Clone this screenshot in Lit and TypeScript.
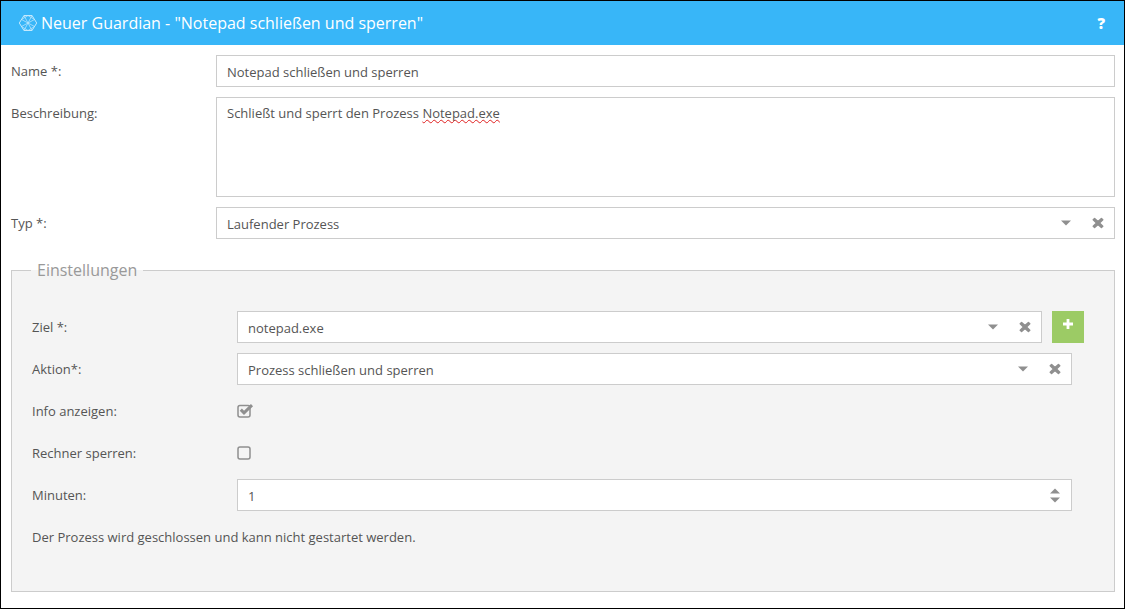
import { LitElement, html, css, svg } from "lit";
import { customElement } from "lit/decorators.js";

const timesIcon = svg`<svg class="ic-x" viewBox="0 0 12 12" width="12" height="12"><path d="M2.6 1.4 L6 4.6 L9.4 1.4 L10.8 2.8 L7.5 6 L10.8 9.2 L9.4 10.6 L6 7.4 L2.6 10.6 L1.2 9.2 L4.5 6 L1.2 2.8 Z" fill="#8f8f8f" stroke="#8f8f8f" stroke-width="1.4" stroke-linejoin="round"/></svg>`;
const caretIcon = svg`<svg class="ic-c" viewBox="0 0 10 6" width="10" height="6"><path d="M0 0.5 H10 L5 5.5 Z" fill="#8f8f8f"/></svg>`;

@customElement("app-root")
export class AppRoot extends LitElement {
  static styles = css`
    :host {
      display: block;
      width: 1125px;
      height: 609px;
      box-sizing: border-box;
      border: 1px solid #000;
      background: #fff;
      overflow: hidden;
      font-family: "Open Sans", sans-serif;
      font-size: 13px;
      color: #555;
    }
    .head {
      height: 44px;
      background: #38b6f8;
      display: flex;
      align-items: center;
      padding: 0 19px 0 17px;
      color: #fff;
      font-size: 16px;
      gap: 3px;
    }
    .head .title { flex: 1; white-space: nowrap; }
    .head svg { display: block; }
    .help { font-weight: 800; font-size: 15px; }
    .form {
      padding: 10px 9px 0 10px;
      display: flex;
      flex-direction: column;
      gap: 10px;
    }
    .row {
      display: grid;
      grid-template-columns: 205px 1fr;
      align-items: center;
      min-height: 32px;
    }
    .top { align-items: start; }
    .top label { padding-top: 7px; }
    .ctl {
      box-sizing: border-box;
      height: 32px;
      background: #fff;
      border: 1px solid #ccc;
      display: flex;
      align-items: center;
      padding: 0 10px;
      white-space: nowrap;
    }
    .ctl .v { flex: 1; padding-top: 1px; }
    .ctl.area { height: 100px; align-items: flex-start; padding-top: 6px; }
    .area .v { padding-top: 0; }
    .sp { text-decoration: underline wavy #e02020 1px; text-underline-offset: 1px; text-decoration-skip-ink: none; }
    .ctl svg { display: block; flex: none; }
    .ic-c { margin-right: 21px; }
    .sel { padding-right: 10px; }
    fieldset {
      margin: 10px 0 0;
      padding: 30px 42px 38px 20px;
      border: 1px solid #ccc;
      background: #f4f4f4;
      display: block;
      min-width: 0;
    }
    legend {
      font-size: 16px;
      color: #999;
      padding: 0 6px;
      margin-left: -1px;
      line-height: 22px;
    }
    .fs {
      display: flex;
      flex-direction: column;
      gap: 10px;
    }
    .with-btn { display: flex; gap: 10px; margin-right: -12px; }
    .with-btn .ctl { flex: 1; }
    .add {
      width: 32px;
      height: 32px;
      flex: none;
      background: #9ccb65;
      display: flex;
      align-items: flex-start;
      justify-content: center;
      padding-top: 8px;
      box-sizing: border-box;
    }
    .chk { display: block; }
    .spin { display: flex; flex-direction: column; gap: 3px; margin-right: 1px; }
    .note { min-height: 32px; display: flex; align-items: center; }
  `;

  render() {
    return html`
      <div class="head">
        <svg viewBox="0 0 20 20" width="20" height="20" fill="none" stroke="#c4e9fd" stroke-width="1">
          <path d="M6 2.5 H14 L18.7 10 L14 17.5 H6 L1.3 10 Z"/>
          <path d="M6 2.5 L14 17.5 M14 2.5 L6 17.5 M3.5 6.5 L16.5 13.5 M16.5 6.5 L3.5 13.5 M10 2.5 L3.5 6.5 M10 2.5 L16.5 6.5 M10 17.5 L3.5 13.5 M10 17.5 L16.5 13.5" stroke-width="0.7"/>
        </svg>
        <span class="title">Neuer Guardian - "Notepad schließen und sperren"</span>
        <span class="help">?</span>
      </div>
      <div class="form">
        <div class="row"><label>Name *:</label><div class="ctl"><span class="v">Notepad schließen und sperren</span></div></div>
        <div class="row top"><label>Beschreibung:</label><div class="ctl area"><span class="v">Schließt und sperrt den Prozess <span class="sp">Notepad.exe</span></span></div></div>
        <div class="row"><label>Typ *:</label><div class="ctl sel"><span class="v">Laufender Prozess</span>${caretIcon}${timesIcon}</div></div>
        <fieldset>
          <legend>Einstellungen</legend>
          <div class="fs">
            <div class="row"><label>Ziel *:</label><div class="with-btn"><div class="ctl sel"><span class="v">notepad.exe</span>${caretIcon}${timesIcon}</div><div class="add"><svg viewBox="0 0 10 10" width="10" height="10"><path d="M3.6 0 H6.4 V3.6 H10 V6.4 H6.4 V10 H3.6 V6.4 H0 V3.6 H3.6 Z" fill="#fff"/></svg></div></div></div>
            <div class="row"><label>Aktion*:</label><div class="ctl sel"><span class="v">Prozess schließen und sperren</span>${caretIcon}${timesIcon}</div></div>
            <div class="row"><label>Info anzeigen:</label>
              <svg class="chk" viewBox="0 0 17 14" width="17" height="14" fill="none"><rect x="1" y="1.5" width="12" height="11.5" rx="2" stroke="#8f8f8f" stroke-width="1.5"/><path d="M3.8 5.6 L7 8.8 L15 1.2" stroke="#8f8f8f" stroke-width="3"/></svg>
            </div>
            <div class="row"><label>Rechner sperren:</label>
              <svg class="chk" viewBox="0 0 14 14" width="14" height="14" fill="none"><rect x="1" y="1" width="12" height="12" rx="2" stroke="#8f8f8f" stroke-width="1.5"/></svg>
            </div>
            <div class="row"><label>Minuten:</label><div class="ctl"><span class="v">1</span>
              <div class="spin">
                <svg viewBox="0 0 10 6" width="10" height="6"><path d="M0 5.5 H10 L5 0.5 Z" fill="#8f8f8f"/></svg>
                <svg viewBox="0 0 10 6" width="10" height="6"><path d="M0 0.5 H10 L5 5.5 Z" fill="#8f8f8f"/></svg>
              </div></div></div>
            <div class="note">Der Prozess wird geschlossen und kann nicht gestartet werden.</div>
          </div>
        </fieldset>
      </div>
    `;
  }
}
